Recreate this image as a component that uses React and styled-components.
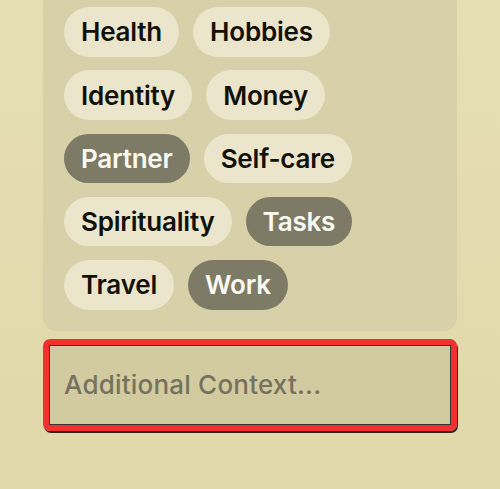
import React from "react";
import styled, { createGlobalStyle } from "styled-components";

const Global = createGlobalStyle`
  html, body { margin: 0; padding: 0; }
  body {
    background: #e4dcb0;
    font-family: Inter, "Noto Sans", sans-serif;
    -webkit-font-smoothing: antialiased;
  }
`;

const Page = styled.div`
  width: 500px;
  height: 489px;
  padding: 0 43px;
  box-sizing: border-box;
  background: linear-gradient(180deg, #e6dfb4 0%, #e0d8aa 100%);
  display: flex;
  flex-direction: column;
  gap: 8px;
`;

const Panel = styled.div`
  background: #d8d0a8;
  border-radius: 0 0 14px 14px;
  padding: 7px 21px 21px;
  display: flex;
  flex-direction: column;
  gap: 13.75px;
`;

const Row = styled.div`
  display: flex;
  gap: 14px;
`;

const Chip = styled.div`
  height: 49.5px;
  padding: 0 17px;
  border-radius: 25px;
  display: flex;
  align-items: center;
  font-size: 26px;
  font-weight: 600;
  letter-spacing: -0.2px;
  background: ${(p) => (p.$active ? "#7d7a66" : "#ebe5cc")};
  color: ${(p) => (p.$active ? "#fbfaf2" : "#111108")};
`;

const Field = styled.div`
  height: 92px;
  box-sizing: border-box;
  border: 6px solid #f2302f;
  border-radius: 7px;
  box-shadow: 1px 2px 0 #2a2820;
  display: flex;
`;

const FieldInner = styled.div`
  flex: 1;
  border: 1.5px solid #3a382c;
  background: #d2cb9f;
  display: flex;
  align-items: center;
  padding-left: 14px;
  font-size: 26px;
  font-weight: 500;
  letter-spacing: 0.2px;
  color: #767260;
`;

const rows = [
  [["Health"], ["Hobbies"]],
  [["Identity"], ["Money"]],
  [["Partner", true], ["Self-care"]],
  [["Spirituality"], ["Tasks", true]],
  [["Travel"], ["Work", true]],
];

export default function App() {
  return (
    <>
      <Global />
      <Page>
        <Panel>
          {rows.map((r, i) => (
            <Row key={i}>
              {r.map(([label, active]) => (
                <Chip key={label} $active={active}>
                  {label}
                </Chip>
              ))}
            </Row>
          ))}
        </Panel>
        <Field>
          <FieldInner>Additional Context...</FieldInner>
        </Field>
      </Page>
    </>
  );
}
